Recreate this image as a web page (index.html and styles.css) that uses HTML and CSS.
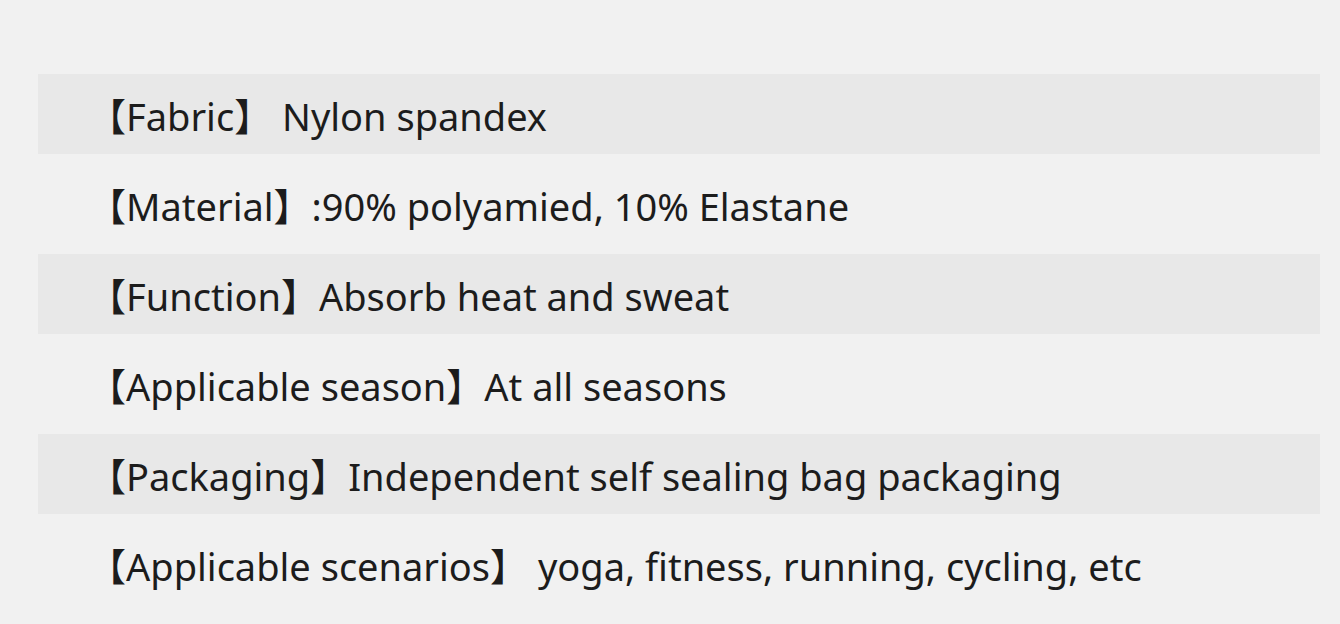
FILE: index.html
```html
<!DOCTYPE html>
<html lang="en">
<head>
<meta charset="utf-8">
<title>Specs</title>
<link rel="stylesheet" href="styles.css">
</head>
<body>
<ul class="specs">
  <li class="row shaded">【Fabric】 Nylon spandex</li>
  <li class="row">【Material】:90% polyamied, 10% Elastane</li>
  <li class="row shaded">【Function】Absorb heat and sweat</li>
  <li class="row">【Applicable season】At all seasons</li>
  <li class="row shaded">【Packaging】Independent self sealing bag packaging</li>
  <li class="row">【Applicable scenarios】 yoga, fitness, running, cycling, etc</li>
</ul>
</body>
</html>
```

FILE: styles.css
```css
html, body {
  margin: 0;
  padding: 0;
  background: #f1f1f1;
}
body {
  width: 1340px;
  height: 624px;
  overflow: hidden;
  font-family: "Noto Sans", "Noto Sans CJK SC", sans-serif;
  color: #1c1c1c;
}
.specs {
  list-style: none;
  margin: 0;
  padding: 74px 20px 0 38px;
  display: flex;
  flex-direction: column;
  gap: 10px;
}
.row {
  height: 80px;
  padding-left: 50px;
  font-size: 38px;
  line-height: 84px;
  white-space: nowrap;
}
.shaded {
  background: #e8e8e8;
}
```
